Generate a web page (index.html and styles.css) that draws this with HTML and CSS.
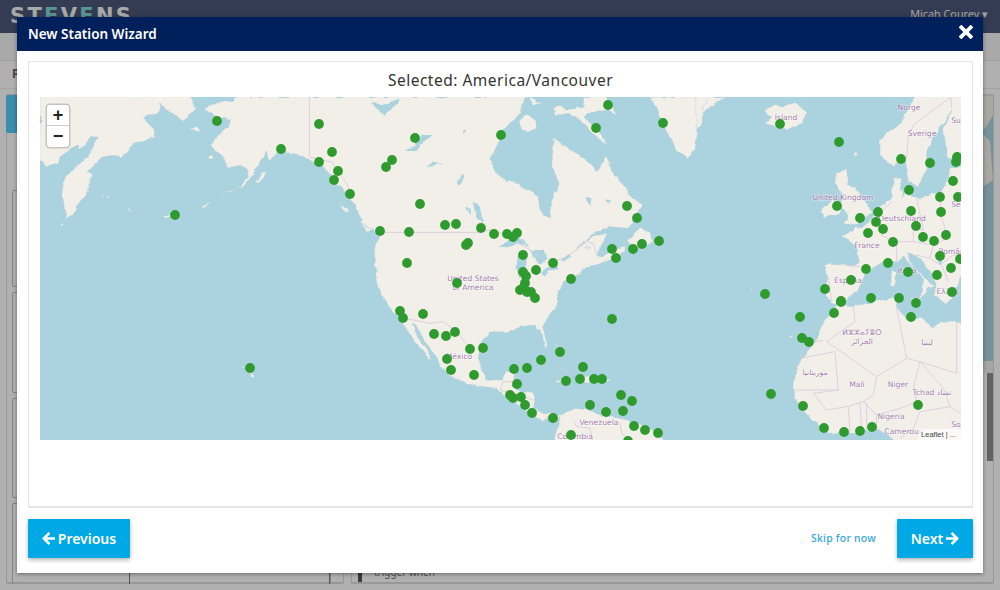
FILE: index.html
```html
<!DOCTYPE html>
<html lang="en">
<head>
<meta charset="utf-8">
<title>New Station Wizard</title>
<link rel="stylesheet" href="styles.css">
</head>
<body>
<div class="app">
  <header class="topbar">
    <div class="logo">ST<span class="logo-e">E</span>V<span class="logo-e">E</span>NS</div>
    <div class="user">Micah Courey ▾</div>
  </header>
  <nav class="subnav"></nav>
  <div class="pagehead">Profile</div>
  <div class="content">
    <section class="leftpanel">
      <div class="tab"></div>
      <div class="cards">
        <div class="card c1"></div>
        <div class="card c2"></div>
        <div class="card c3"></div>
        <div class="card c4"><div class="cell cell-a"></div><div class="cell cell-b"></div><div class="cell cell-c"></div></div>
      </div>
    </section>
    <section class="rightpanel">
      <div class="bgmap">
        <svg class="bgmap-svg" viewBox="0 0 643 266"><polygon class="bgland" points="0,0 643,0 643,20 632,38 640,46 643,85 632,92 0,92"/></svg>
      </div>
      <div class="bgattr"></div>
      <div class="bgrow">
        <div class="bgtext"><span class="bgmark"></span>trigger when</div>
        <div class="scrolltrack"><div class="scrollthumb"></div></div>
      </div>
    </section>
  </div>
</div>

<div class="backdrop"></div>

<div class="modal">
  <div class="modal-head">
    <h1 class="modal-title">New Station Wizard</h1>
    <svg class="close" viewBox="0 0 12 12"><path d="M2 2L10 10M10 2L2 10"/></svg>
  </div>
  <div class="modal-body">
    <div class="panel">
      <h2 class="selected">Selected: America/Vancouver</h2>
      <div class="map">
        <svg class="map-svg" viewBox="40 97 921 343">
          <defs>
            <filter id="coast" x="0" y="0" width="100%" height="100%">
              <feTurbulence type="fractalNoise" baseFrequency="0.11" numOctaves="3" seed="4" result="noise"/>
              <feDisplacementMap in="SourceGraphic" in2="noise" scale="5" xChannelSelector="R" yChannelSelector="G"/>
            </filter>
          </defs>
          <g filter="url(#coast)">
          <g transform="translate(40 95) scale(.33333)">
            <path class="land" d="M0 0L0 200L20 212L55 207L60 185L90 165L115 150L120 165L155 125L175 127L150 175L110 215L75 245L66 290L78 375L100 355L120 320L145 290L155 240L143 228L165 210L190 185L235 180L242 190L290 140L345 127L335 90L310 68L325 62L360 50L358 28L390 48L430 80L440 70L470 40L448 0Z"/>
            <path class="land" d="M448 100L470 98L485 110L465 108ZM500 185L518 180L520 192L505 192ZM645 258L665 232L680 228L672 245L655 262ZM185 290L195 300L190 302ZM200 302L212 308L205 310ZM265 340L278 345L268 347ZM372 360L395 358L395 365L378 366ZM480 338L510 320L495 338ZM60 390L75 378L68 392ZM632 832L645 840L640 848L632 845ZM588 806L595 810L590 812ZM608 815L616 820L610 822Z"/>
          </g>
          <g transform="translate(300 100) scale(.33333)">
            <path class="land" d="M-200 -10L-200 0L-240 5L-285 25L-260 45L-235 55L-205 57L-215 80L-250 110L-265 135L-250 155L-230 175L-215 205L-180 200L-160 210L-155 225L-180 260L-220 275L-250 290L-210 275L-170 257L-140 220L-120 190L-100 155L-95 185L-75 170L-60 135L-40 160L20 172L55 190L90 222L100 245L125 260L150 300L170 325L185 360L178 368L210 385L240 405L225 440L222 490L235 560L258 610L280 635L310 665L330 705L350 730L385 775L395 782L385 755L355 715L335 670L350 680L375 725L400 760L420 790L445 825L490 845L530 860L590 868L610 885L640 905L665 920L695 945L730 965L758 955L780 950L770 990L760 1030L1100 1030L1075 1005L1040 985L1000 965L960 955L900 945L860 930L830 925L800 935L785 945L740 940L700 925L705 900L695 880L650 870L635 860L650 810L620 815L605 840L565 840L545 810L535 770L540 730L570 695L620 695L650 685L700 672L720 695L738 750L742 735L728 680L745 650L775 615L772 570L790 545L835 522L860 505L905 490L960 465L975 440L940 450L905 470L890 470L910 430L925 400L880 408L830 445L875 405L925 380L985 385L1000 365L1025 320L1003 295L945 225L918 170L892 212L860 180L830 160L780 130L762 112L755 200L780 245L755 300L752 355L720 330L715 290L650 250L600 235L570 180L590 130L610 90L640 60L660 35L670 0L680 -10Z"/>
            <path class="land" d="M765 50L800 40L830 55L860 80L895 115L922 135L905 105L870 70L855 50L890 30L920 30L945 48L938 15L910 -10L850 -10L850 20L800 30L780 15L760 25ZM660 60L680 40L705 60L710 85L680 95L665 85ZM690 -10L725 10L700 15ZM985 420L1020 385L1045 395L1058 430L1025 440L1000 455ZM905 490L935 470L935 480L915 490ZM1050 -9L1068 24L1104 105L1131 150L1164 174L1185 150L1194 90L1206 45L1236 15L1281 -9ZM770 842L800 838L830 825L770 850ZM755 790L800 815L830 830L795 810ZM835 825L880 835L905 840L880 850L840 845ZM765 730L775 760L770 735ZM915 838L935 838L920 845ZM180 370L220 390L205 395ZM120 300L145 335L135 340ZM850 440L875 440L860 445Z"/>
            <path class="lake" d="M215 10L250 15L300 -5L285 20L250 48L238 30ZM315 150L345 135L365 105L400 105L375 125L350 150ZM380 205L395 185L430 190L405 195ZM470 250L488 220L490 240L478 258ZM518 310L538 315L550 372L530 350ZM495 325L510 325L510 345ZM490 90L498 92L490 105ZM600 440L625 418L660 410L690 442L650 430L625 442ZM652 470L675 462L680 480L672 530L660 535L650 510ZM690 450L730 450L745 480L720 490L700 470ZM720 520L770 490L775 500L730 525ZM780 478L810 462L815 470L785 485ZM855 290L875 295L870 320L860 305ZM915 300L930 300L925 310ZM720 320L735 340L745 352L730 345ZM745 255L758 255L750 270Z"/>
          </g>
          <g transform="translate(700 95) scale(.33333)">
            <path class="land" d="M-10 -10L30 0L10 40L0 95L-10 100ZM195 45L225 25L240 35L290 25L318 50L310 85L255 105L215 90L195 80L215 65L200 55Z"/>
            <path class="land" d="M410 235L435 222L445 240L440 265L465 280L495 320L515 350L475 385L420 390L445 365L430 345L420 330L430 305L405 265ZM360 345L395 315L425 335L420 355L375 365ZM575 525L590 530L585 575L572 570ZM625 605L665 610L660 625ZM462 170L470 175L462 190ZM150 582L160 580L155 586ZM268 722L280 722L272 730Z"/>
            <path class="land" d="M645 -10L625 45L600 85L565 110L540 135L540 180L580 215L612 190L625 260L655 280L680 225L680 170L705 120L760 40L730 95L735 140L745 190L790 170L790 -10Z"/>
            <path class="land" d="M790 215L750 215L745 250L722 290L660 310L640 305L615 295L605 310L610 295L600 285L605 250L580 250L575 310L535 340L512 375L490 395L465 395L460 410L425 420L430 430L470 455L478 500L470 510L370 508L375 530L385 545L372 590L395 625L425 625L470 590L495 540L525 515L550 500L590 500L610 485L640 520L672 555L665 580L660 620L680 585L700 570L655 530L628 500L625 475L650 480L680 515L705 560L705 600L740 630L760 600L745 585L770 575L786 540L790 540Z"/>
            <path class="land" d="M415 628L375 675L345 745L315 780L290 815L280 880L292 925L340 980L395 1018L470 1012L530 1000L590 1040L790 1040L790 690L745 675L700 695L660 670L625 675L590 640L590 605L520 620L460 632Z"/>
            <path class="lake" d="M712 490L728 495L720 510ZM620 20L640 10L635 25Z"/>
          </g>
          </g>
          <g transform="translate(300 100) scale(.33333)">
            <path class="border" d="M28 -10L28 170L60 180L95 185L130 235L150 270M240 397L500 397L540 397L570 390L620 405L690 450L745 490L790 475L830 450L860 425L880 430L890 465M305 655L340 660L390 670L430 665L470 695L510 745L512 752M600 870L610 845L640 845M600 870L640 880L700 900M640 905L660 885M820 960L830 980L870 985L880 1030M960 970L965 1000L1000 1030M730 965L745 945"/>
          </g>
          <g transform="translate(700 95) scale(.33333)">
            <path class="border" d="M755 5L720 30L640 90L625 130L620 190M755 40L752 0M385 545L395 620M430 510L480 515M575 320L535 360L545 420L580 440L640 440L640 400L670 405L650 310M590 440L590 500M640 440L700 450L740 430L735 400L722 360L722 290M700 450L690 490L720 510L760 480L790 480M690 490L650 480M725 510L745 560M300 790L405 770L415 885L280 885M300 790L315 750L370 735M460 632L465 680L380 740L530 845L620 790L590 640M530 845L520 900L490 920L530 960L600 940L650 920L640 880L660 800L620 790M415 885L340 895L380 945L440 935L490 920M660 800L770 835L770 680M660 800L730 880L750 935L660 950L640 1000L600 1030M530 960L530 1000M445 935L450 1010M480 925L485 1005M500 925L500 1005M750 935L790 960"/>
          </g>
          <g class="labels">
            <text x="909" y="110">Norge</text>
            <text x="922" y="136">Sverige</text>
            <text x="956" y="123">Su</text>
            <text x="786" y="120">Ísland</text>
            <text x="843" y="200">United Kingdom</text>
            <text x="902" y="221">Deutschland</text>
            <text x="867" y="248">France</text>
            <text x="955" y="254">România</text>
            <text x="907" y="273">Italia</text>
            <text x="848" y="283">España</text>
            <text x="948" y="294">Ελλάς</text>
            <text x="956" y="207">Se</text>
            <text x="862" y="335">ⵍⵣⵣⴰⵢⴻⵔ</text>
            <text x="862" y="344">الجزائر</text>
            <text x="927" y="345">ليبيا</text>
            <text x="815" y="375">موريتانيا</text>
            <text x="857" y="387">Mali</text>
            <text x="898" y="387">Niger</text>
            <text x="932" y="395">Tchad تشاد</text>
            <text x="891" y="419">Nigeria</text>
            <text x="904" y="434">Cameroun</text>
            <text x="956" y="427">So</text>
            <text x="599" y="425">Venezuela</text>
            <text x="575" y="439">Colombia</text>
            <text x="473" y="281">United States</text>
            <text x="473" y="290">of America</text>
            <text x="459" y="359">México</text>
          </g>
          <g class="pins">
            <circle cx="217" cy="121" r="4.9"/><circle cx="319" cy="124" r="4.9"/><circle cx="281" cy="149" r="4.9"/><circle cx="332" cy="152" r="4.9"/><circle cx="319" cy="162" r="4.9"/><circle cx="338" cy="171" r="4.9"/><circle cx="334" cy="180" r="4.9"/><circle cx="175" cy="215" r="4.9"/><circle cx="250" cy="368" r="4.9"/>
            <circle cx="350" cy="194" r="4.9"/><circle cx="415" cy="138" r="4.9"/><circle cx="392" cy="160" r="4.9"/><circle cx="386" cy="167" r="4.9"/><circle cx="420" cy="204" r="4.9"/><circle cx="501" cy="135" r="4.9"/><circle cx="596" cy="128" r="4.9"/><circle cx="608" cy="105" r="4.9"/><circle cx="663" cy="123" r="4.9"/><circle cx="627" cy="206" r="4.9"/><circle cx="637" cy="218" r="4.9"/><circle cx="659" cy="241" r="4.9"/><circle cx="642" cy="244" r="4.9"/><circle cx="633" cy="249" r="4.9"/><circle cx="612" cy="249" r="4.9"/><circle cx="616" cy="258" r="4.9"/>
            <circle cx="380" cy="231" r="4.9"/><circle cx="409" cy="232" r="4.9"/><circle cx="445" cy="225" r="4.9"/><circle cx="456" cy="224" r="4.9"/><circle cx="481" cy="228" r="4.9"/><circle cx="494" cy="234" r="4.9"/><circle cx="507" cy="234" r="4.9"/><circle cx="513" cy="237" r="4.9"/><circle cx="517" cy="233" r="4.9"/><circle cx="468" cy="243" r="4.9"/><circle cx="466" cy="245" r="4.9"/><circle cx="523" cy="255" r="4.9"/><circle cx="553" cy="263" r="4.9"/><circle cx="536" cy="270" r="4.9"/><circle cx="523" cy="272" r="4.9"/><circle cx="526" cy="276" r="4.9"/><circle cx="525" cy="283" r="4.9"/><circle cx="571" cy="279" r="4.9"/><circle cx="407" cy="263" r="4.9"/><circle cx="457" cy="283" r="4.9"/><circle cx="520" cy="290" r="4.9"/><circle cx="524" cy="287" r="4.9"/><circle cx="527" cy="292" r="4.9"/><circle cx="531" cy="292" r="4.9"/><circle cx="535" cy="298" r="4.9"/>
            <circle cx="400" cy="311" r="4.9"/><circle cx="403" cy="318" r="4.9"/><circle cx="423" cy="314" r="4.9"/><circle cx="434" cy="334" r="4.9"/><circle cx="446" cy="336" r="4.9"/><circle cx="455" cy="332" r="4.9"/><circle cx="612" cy="319" r="4.9"/><circle cx="470" cy="349" r="4.9"/><circle cx="483" cy="348" r="4.9"/><circle cx="447" cy="359" r="4.9"/><circle cx="451" cy="370" r="4.9"/><circle cx="474" cy="375" r="4.9"/><circle cx="560" cy="352" r="4.9"/><circle cx="541" cy="360" r="4.9"/><circle cx="527" cy="368" r="4.9"/><circle cx="514" cy="369" r="4.9"/><circle cx="583" cy="367" r="4.9"/><circle cx="517" cy="384" r="4.9"/><circle cx="566" cy="381" r="4.9"/><circle cx="580" cy="379" r="4.9"/><circle cx="594" cy="379" r="4.9"/><circle cx="602" cy="379" r="4.9"/>
            <circle cx="510" cy="395" r="4.9"/><circle cx="513" cy="398" r="4.9"/><circle cx="521" cy="397" r="4.9"/><circle cx="525" cy="405" r="4.9"/><circle cx="532" cy="413" r="4.9"/><circle cx="553" cy="418" r="4.9"/><circle cx="590" cy="405" r="4.9"/><circle cx="606" cy="412" r="4.9"/><circle cx="621" cy="395" r="4.9"/><circle cx="632" cy="401" r="4.9"/><circle cx="623" cy="411" r="4.9"/><circle cx="634" cy="426" r="4.9"/><circle cx="645" cy="430" r="4.9"/><circle cx="658" cy="433" r="4.9"/><circle cx="571" cy="435" r="4.9"/><circle cx="628" cy="441" r="4.9"/>
            <circle cx="780" cy="124" r="4.9"/><circle cx="839" cy="142" r="4.9"/><circle cx="901" cy="159" r="4.9"/><circle cx="930" cy="163" r="4.9"/><circle cx="957" cy="157" r="4.9"/><circle cx="956" cy="162" r="4.9"/><circle cx="953" cy="181" r="4.9"/><circle cx="909" cy="190" r="4.9"/><circle cx="940" cy="197" r="4.9"/><circle cx="958" cy="197" r="4.9"/><circle cx="837" cy="206" r="4.9"/><circle cx="878" cy="212" r="4.9"/><circle cx="911" cy="211" r="4.9"/><circle cx="941" cy="212" r="4.9"/><circle cx="860" cy="218" r="4.9"/><circle cx="876" cy="222" r="4.9"/><circle cx="916" cy="226" r="4.9"/><circle cx="883" cy="229" r="4.9"/><circle cx="868" cy="233" r="4.9"/><circle cx="923" cy="237" r="4.9"/><circle cx="934" cy="241" r="4.9"/><circle cx="946" cy="235" r="4.9"/><circle cx="893" cy="242" r="4.9"/><circle cx="940" cy="256" r="4.9"/><circle cx="960" cy="259" r="4.9"/><circle cx="888" cy="263" r="4.9"/><circle cx="866" cy="269" r="4.9"/><circle cx="951" cy="268" r="4.9"/><circle cx="908" cy="272" r="4.9"/><circle cx="937" cy="275" r="4.9"/><circle cx="851" cy="280" r="4.9"/><circle cx="825" cy="289" r="4.9"/><circle cx="765" cy="294" r="4.9"/><circle cx="952" cy="292" r="4.9"/><circle cx="871" cy="298" r="4.9"/><circle cx="899" cy="298" r="4.9"/><circle cx="841" cy="301" r="4.9"/><circle cx="841" cy="302" r="4.9"/><circle cx="916" cy="303" r="4.9"/><circle cx="834" cy="313" r="4.9"/><circle cx="911" cy="317" r="4.9"/><circle cx="800" cy="317" r="4.9"/><circle cx="802" cy="338" r="4.9"/><circle cx="809" cy="342" r="4.9"/><circle cx="771" cy="394" r="4.9"/><circle cx="803" cy="406" r="4.9"/><circle cx="918" cy="405" r="4.9"/><circle cx="824" cy="428" r="4.9"/><circle cx="844" cy="432" r="4.9"/><circle cx="860" cy="431" r="4.9"/><circle cx="872" cy="427" r="4.9"/>
          </g>
        </svg>
        <div class="zoomctl">
          <div class="zoombtn zoomin">+</div>
          <div class="zoombtn">−</div>
        </div>
        <div class="attrib">Leaflet | ...</div>
      </div>
    </div>
  </div>
  <div class="modal-foot">
    <button class="btn">
      <svg class="arrow" viewBox="0 0 14 14"><path d="M7 2L2 7L7 12M2.5 7H13"/></svg>Previous
    </button>
    <a class="skip">Skip for now</a>
    <button class="btn btn-next">
      Next<svg class="arrow" viewBox="0 0 14 14"><path d="M7 2L12 7L7 12M11.5 7H1"/></svg>
    </button>
  </div>
</div>
</body>
</html>
```
FILE: styles.css
```css
* { box-sizing: border-box; }
html, body { margin: 0; height: 100%; }
body {
  width: 1000px;
  height: 590px;
  overflow: hidden;
  position: relative;
  background: #fcfcfc;
  font-family: "Noto Sans", "Open Sans", sans-serif;
}

/* page behind the wizard */
.app { display: flex; flex-direction: column; height: 590px; }
.topbar {
  height: 33px;
  flex: none;
  background: #4a5777;
  display: flex;
  justify-content: space-between;
  padding: 4px 12px 0 10px;
  color: #fff;
}
.logo {
  font-family: "DejaVu Sans", sans-serif;
  font-size: 21px;
  font-weight: 700;
  letter-spacing: 2.3px;
  line-height: 24px;
  color: #f2f2f2;
}
.logo-e { color: #7fd4d4; }
.user { font-size: 10.8px; line-height: 20px; color: #e8e8e8; }
.subnav { height: 28px; flex: none; background: #f2f2f2; border-bottom: 1px solid #e4e4e4; }
.pagehead {
  height: 28px;
  flex: none;
  padding-left: 12px;
  font-size: 12px;
  font-weight: 700;
  line-height: 26px;
  color: #666;
  border-bottom: 1px solid #e8e8e8;
}
.content { flex: 1; display: flex; gap: 7px; padding: 5px 6px 6px 6px; min-height: 0; }
.leftpanel {
  width: 338px;
  flex: none;
  border: 1px solid #d8d8d8;
  border-bottom-width: 2px;
  border-radius: 2px;
  position: relative;
  padding: 95px 12px 0 5px;
}
.tab { position: absolute; left: -1px; top: 0; width: 120px; height: 38px; background: #53ccf8; border-radius: 2px; }
.cards { display: flex; flex-direction: column; gap: 5px; }
.card { border: 1px solid #bdbdbd; border-radius: 2px; height: 97px; }
.c2 { height: 101px; }
.c3 { height: 100px; }
.c4 { height: 81px; border-width: 1px 1px 0; display: flex; align-items: flex-end; }
.cell { height: 12px; }
.cell-a { width: 116px; }
.cell-b { flex: 1; border-left: 1px solid #777; border-right: 1px solid #777; }
.cell-c { width: 0; }
.rightpanel {
  flex: 1;
  border: 1px solid #d8d8d8;
  border-bottom-width: 2px;
  border-radius: 2px;
  display: flex;
  flex-direction: column;
  min-width: 0;
}
.bgmap { height: 266px; flex: none; background: #aad3df; }
.bgmap-svg { display: block; width: 100%; height: 100%; }
.bgland { fill: #f2efe9; }
.bgattr { height: 12px; flex: none; background: #eeeeee; }
.bgrow { flex: 1; display: flex; justify-content: space-between; min-height: 0; }
.bgtext { align-self: flex-end; display: flex; gap: 12px; padding-left: 6px; font-size: 10px; color: #777; height: 10px; line-height: 0; }
.bgmark { width: 4px; height: 10px; background: #555; }
.scrolltrack { width: 6px; }
.scrollthumb { height: 88px; background: #8f8f8f; }
.backdrop { position: absolute; inset: 0; background: rgba(0, 0, 0, .3); }

/* wizard */
.modal {
  position: absolute;
  left: 17px;
  top: 17px;
  width: 966px;
  height: 556px;
  display: flex;
  flex-direction: column;
  background: #fff;
  box-shadow: 0 1px 4px rgba(0, 0, 0, .4);
}
.modal-head {
  height: 34px;
  flex: none;
  background: #00205b;
  display: flex;
  align-items: center;
  justify-content: space-between;
  padding: 0 10px 0 11px;
}
.modal-title { margin: 0; font-size: 13.5px; font-weight: 600; color: #fff; }
.close { width: 14px; height: 14px; margin-top: -5px; }
.close path { fill: none; stroke: #fff; stroke-width: 3.2; stroke-linecap: square; }
.modal-body { flex: 1; min-height: 0; padding: 10px 10px 0 11px; display: flex; }
.panel {
  flex: 1;
  border: 1px solid #e5e5e5;
  border-bottom-width: 2px;
  padding: 0 11px;
  display: flex;
  flex-direction: column;
  min-width: 0;
}
.selected {
  margin: 0;
  height: 35px;
  flex: none;
  text-align: center;
  font-size: 15.5px;
  font-weight: 400;
  line-height: 37px;
  letter-spacing: .5px;
  color: #333;
}
.map { height: 343px; flex: none; position: relative; overflow: hidden; background: #aad3df; }
.map-svg { display: block; width: 100%; height: 100%; }
.land { fill: #f2efe9; stroke: #a2c6d2; stroke-width: 1; }
.lake { fill: #aad3df; }
.border { fill: none; stroke: #dcc9de; stroke-width: 2.6; }
.labels text {
  font-family: "DejaVu Sans", sans-serif;
  font-size: 7.6px;
  text-anchor: middle;
  fill: #a680b0;
  stroke: rgba(255, 255, 255, .45);
  stroke-width: 1.5px;
  paint-order: stroke;
}
.pins circle { fill: #2f9b2f; }
.zoomctl {
  position: absolute;
  left: 7px;
  top: 8px;
  width: 22px;
  background: #fff;
  border-radius: 3px;
  box-shadow: 0 0 0 1.5px rgba(0, 0, 0, .18);
}
.zoombtn {
  height: 21px;
  text-align: center;
  font-family: "Liberation Sans", sans-serif;
  font-size: 18px;
  font-weight: 700;
  line-height: 20px;
  color: #222;
}
.zoomin { border-bottom: 1px solid #ccc; }
.attrib {
  position: absolute;
  right: 0;
  bottom: 0;
  padding: 0 5px 0 2px;
  background: rgba(255, 255, 255, .7);
  font-family: "Liberation Sans", sans-serif;
  font-size: 7.5px;
  line-height: 11px;
  color: #444;
}
.modal-foot {
  height: 65px;
  flex: none;
  display: flex;
  align-items: flex-start;
  padding: 11px 10px 0 11px;
}
.btn {
  height: 39px;
  width: 102px;
  border: 0;
  border-radius: 1px;
  background: #00a9e6;
  color: #fff;
  font-family: inherit;
  font-size: 14px;
  font-weight: 600;
  display: flex;
  align-items: center;
  justify-content: center;
  gap: 3px;
  padding: 0;
  box-shadow: 0 2px 4px rgba(0, 0, 0, .3);
}
.btn-next { width: 76px; }
.arrow { width: 13px; height: 13px; }
.arrow path { fill: none; stroke: #fff; stroke-width: 2.8; stroke-linecap: square; }
.skip {
  margin: 0 21px 0 auto;
  align-self: flex-start;
  font-size: 10.5px;
  font-weight: 500;
  line-height: 39px;
  letter-spacing: .22px;
  color: #35a7e0;
}
```
